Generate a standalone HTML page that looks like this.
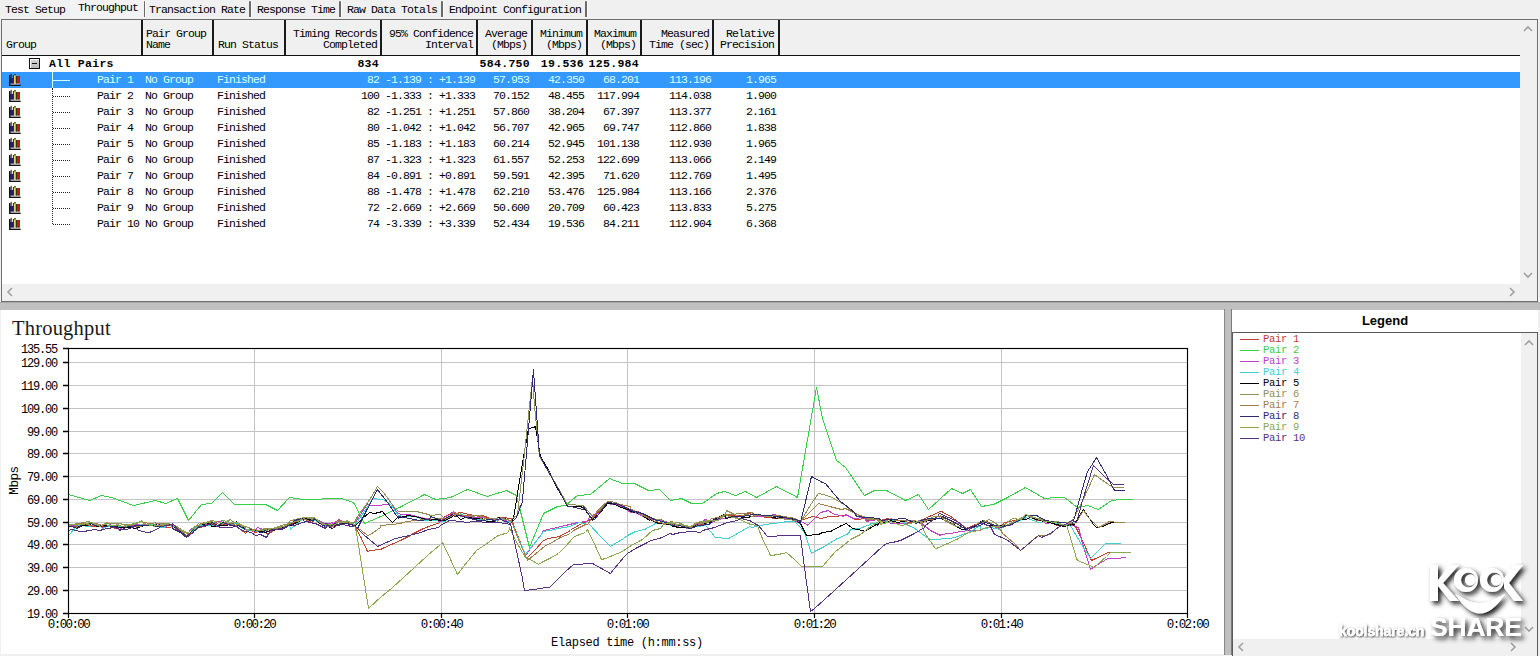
<!DOCTYPE html><html><head><meta charset='utf-8'><style>
*{margin:0;padding:0;box-sizing:border-box}
html,body{width:1540px;height:656px;overflow:hidden;background:#f0f0f0;position:relative}
.a{position:absolute}
.t{position:absolute;font-family:"Liberation Mono", monospace;font-size:11.5px;letter-spacing:-0.9px;line-height:11px;color:#000;white-space:pre}
.r{text-align:right}
.b{font-weight:bold;letter-spacing:0.3px}
</style></head><body>
<div class='t' style='left:5px;top:4px'>Test Setup</div>
<div class='t' style='left:149px;top:4px'>Transaction Rate</div>
<div class='t' style='left:257px;top:4px'>Response Time</div>
<div class='t' style='left:347px;top:4px'>Raw Data Totals</div>
<div class='t' style='left:449px;top:4px'>Endpoint Configuration</div>
<div class='a' style='left:143px;top:1px;width:2px;height:16px;background:#6a6a6a;border-radius:1px 1px 0 0'></div>
<div class='a' style='left:145px;top:1px;width:1px;height:16px;background:#fafafa'></div>
<div class='a' style='left:249px;top:1px;width:2px;height:16px;background:#6a6a6a;border-radius:1px 1px 0 0'></div>
<div class='a' style='left:251px;top:1px;width:1px;height:16px;background:#fafafa'></div>
<div class='a' style='left:339px;top:1px;width:2px;height:16px;background:#6a6a6a;border-radius:1px 1px 0 0'></div>
<div class='a' style='left:341px;top:1px;width:1px;height:16px;background:#fafafa'></div>
<div class='a' style='left:441px;top:1px;width:2px;height:16px;background:#6a6a6a;border-radius:1px 1px 0 0'></div>
<div class='a' style='left:443px;top:1px;width:1px;height:16px;background:#fafafa'></div>
<div class='a' style='left:585px;top:1px;width:2px;height:16px;background:#6a6a6a;border-radius:1px 1px 0 0'></div>
<div class='a' style='left:587px;top:1px;width:1px;height:16px;background:#fafafa'></div>
<div class='a' style='left:70px;top:0;width:74px;height:18px;background:#f3f3f3'></div>
<div class='t' style='left:78px;top:2px'>Throughput</div>
<div class='a' style='left:1px;top:19px;width:1537px;height:283px;background:#fff;border:1px solid #6e6e6e'></div>
<div class='a' style='left:2px;top:20px;width:1518px;height:35px;background:#f0f0f0'></div>
<div class='a' style='left:2px;top:55px;width:1518px;height:1px;background:#111'></div>
<div class='a' style='left:141px;top:20px;width:2px;height:35px;background:#1a1a1a'></div>
<div class='a' style='left:212px;top:20px;width:2px;height:35px;background:#1a1a1a'></div>
<div class='a' style='left:284px;top:20px;width:2px;height:35px;background:#1a1a1a'></div>
<div class='a' style='left:380px;top:20px;width:2px;height:35px;background:#1a1a1a'></div>
<div class='a' style='left:476px;top:20px;width:2px;height:35px;background:#1a1a1a'></div>
<div class='a' style='left:531px;top:20px;width:2px;height:35px;background:#1a1a1a'></div>
<div class='a' style='left:586px;top:20px;width:2px;height:35px;background:#1a1a1a'></div>
<div class='a' style='left:640px;top:20px;width:2px;height:35px;background:#1a1a1a'></div>
<div class='a' style='left:712px;top:20px;width:2px;height:35px;background:#1a1a1a'></div>
<div class='a' style='left:778px;top:20px;width:2px;height:35px;background:#1a1a1a'></div>
<div class='t' style='left:6px;top:39px'>Group</div>
<div class='t' style='left:146px;top:28px'>Pair Group</div>
<div class='t' style='left:146px;top:39px'>Name</div>
<div class='t' style='left:218px;top:39px'>Run Status</div>
<div class='t r' style='left:177px;width:200px;top:28px'>Timing Records</div>
<div class='t r' style='left:177px;width:200px;top:39px'>Completed</div>
<div class='t r' style='left:273px;width:200px;top:28px'>95% Confidence</div>
<div class='t r' style='left:273px;width:200px;top:39px'>Interval</div>
<div class='t r' style='left:327px;width:200px;top:28px'>Average</div>
<div class='t r' style='left:327px;width:200px;top:39px'>(Mbps)</div>
<div class='t r' style='left:382px;width:200px;top:28px'>Minimum</div>
<div class='t r' style='left:382px;width:200px;top:39px'>(Mbps)</div>
<div class='t r' style='left:436px;width:200px;top:28px'>Maximum</div>
<div class='t r' style='left:436px;width:200px;top:39px'>(Mbps)</div>
<div class='t r' style='left:509px;width:200px;top:28px'>Measured</div>
<div class='t r' style='left:509px;width:200px;top:39px'>Time (sec)</div>
<div class='t r' style='left:574px;width:200px;top:28px'>Relative</div>
<div class='t r' style='left:574px;width:200px;top:39px'>Precision</div>
<div class='a' style='left:29px;top:58px;width:11px;height:11px;border:1px solid #111;background:linear-gradient(#d8d8d8,#b8b8b8);box-shadow:inset 1px 1px 0 #fff'></div>
<div class='a' style='left:32px;top:63px;width:5px;height:1px;background:#111'></div>
<div class='t b' style='left:49px;top:58px;font-size:11.5px'>All Pairs</div>
<div class='t r b' style='left:179px;width:200px;top:58px;font-size:11.5px'>834</div>
<div class='t r b' style='left:330px;width:200px;top:58px;font-size:11.5px'>584.750</div>
<div class='t r b' style='left:384px;width:200px;top:58px;font-size:11.5px'>19.536</div>
<div class='t r b' style='left:439px;width:200px;top:58px;font-size:11.5px'>125.984</div>
<div class='a' style='left:2px;top:72px;width:1518px;height:16px;background:#3399ff'></div>
<div class='a' style='left:52px;top:88px;width:1px;height:136px;border-left:1px dotted #222'></div>
<div class='a' style='left:52px;top:72px;width:1px;height:16px;background:#cfffff'></div>
<svg class='a' style='left:9px;top:73px' width='13' height='13' viewBox='0 0 13 13'><rect x='1.2' y='5' width='3.4' height='6' fill='#1c1c90'/><rect x='4.4' y='1.8' width='2.8' height='9.2' fill='#e6d050'/><rect x='7.2' y='3' width='3.8' height='8' fill='#a82818'/><path d='M0.8,2 L0.8,12.2 L11.6,12.2' fill='none' stroke='#111' stroke-width='1.6'/><path d='M2.2,0.8 L2.2,5 M4.4,2 L4.4,11 M7.3,3 L7.3,11 M5,1.8 L7,1.8' fill='none' stroke='#222' stroke-width='1'/><rect x='1.5' y='10.6' width='9.5' height='0.8' fill='#d8d8e8'/></svg>
<div class='a' style='left:53px;top:80px;width:17px;height:1px;background:#cfffff'></div>
<div class='t' style='left:97px;top:74px;color:#d8ffff'>Pair 1</div>
<div class='t' style='left:145px;top:74px;color:#d8ffff'>No Group</div>
<div class='t' style='left:217px;top:74px;color:#d8ffff'>Finished</div>
<div class='t r' style='left:179px;width:200px;top:74px;color:#d8ffff'>82</div>
<div class='t r' style='left:275px;width:200px;top:74px;color:#d8ffff'>-1.139 : +1.139</div>
<div class='t r' style='left:329px;width:200px;top:74px;color:#d8ffff'>57.953</div>
<div class='t r' style='left:384px;width:200px;top:74px;color:#d8ffff'>42.350</div>
<div class='t r' style='left:439px;width:200px;top:74px;color:#d8ffff'>68.201</div>
<div class='t r' style='left:511px;width:200px;top:74px;color:#d8ffff'>113.196</div>
<div class='t r' style='left:576px;width:200px;top:74px;color:#d8ffff'>1.965</div>
<svg class='a' style='left:9px;top:89px' width='13' height='13' viewBox='0 0 13 13'><rect x='1.2' y='5' width='3.4' height='6' fill='#1c1c90'/><rect x='4.4' y='1.8' width='2.8' height='9.2' fill='#e6d050'/><rect x='7.2' y='3' width='3.8' height='8' fill='#a82818'/><path d='M0.8,2 L0.8,12.2 L11.6,12.2' fill='none' stroke='#111' stroke-width='1.6'/><path d='M2.2,0.8 L2.2,5 M4.4,2 L4.4,11 M7.3,3 L7.3,11 M5,1.8 L7,1.8' fill='none' stroke='#222' stroke-width='1'/><rect x='1.5' y='10.6' width='9.5' height='0.8' fill='#d8d8e8'/></svg>
<div class='a' style='left:53px;top:96px;width:17px;height:1px;border-top:1px dotted #222'></div>
<div class='t' style='left:97px;top:90px;color:#000'>Pair 2</div>
<div class='t' style='left:145px;top:90px;color:#000'>No Group</div>
<div class='t' style='left:217px;top:90px;color:#000'>Finished</div>
<div class='t r' style='left:179px;width:200px;top:90px;color:#000'>100</div>
<div class='t r' style='left:275px;width:200px;top:90px;color:#000'>-1.333 : +1.333</div>
<div class='t r' style='left:329px;width:200px;top:90px;color:#000'>70.152</div>
<div class='t r' style='left:384px;width:200px;top:90px;color:#000'>48.455</div>
<div class='t r' style='left:439px;width:200px;top:90px;color:#000'>117.994</div>
<div class='t r' style='left:511px;width:200px;top:90px;color:#000'>114.038</div>
<div class='t r' style='left:576px;width:200px;top:90px;color:#000'>1.900</div>
<svg class='a' style='left:9px;top:105px' width='13' height='13' viewBox='0 0 13 13'><rect x='1.2' y='5' width='3.4' height='6' fill='#1c1c90'/><rect x='4.4' y='1.8' width='2.8' height='9.2' fill='#e6d050'/><rect x='7.2' y='3' width='3.8' height='8' fill='#a82818'/><path d='M0.8,2 L0.8,12.2 L11.6,12.2' fill='none' stroke='#111' stroke-width='1.6'/><path d='M2.2,0.8 L2.2,5 M4.4,2 L4.4,11 M7.3,3 L7.3,11 M5,1.8 L7,1.8' fill='none' stroke='#222' stroke-width='1'/><rect x='1.5' y='10.6' width='9.5' height='0.8' fill='#d8d8e8'/></svg>
<div class='a' style='left:53px;top:112px;width:17px;height:1px;border-top:1px dotted #222'></div>
<div class='t' style='left:97px;top:106px;color:#000'>Pair 3</div>
<div class='t' style='left:145px;top:106px;color:#000'>No Group</div>
<div class='t' style='left:217px;top:106px;color:#000'>Finished</div>
<div class='t r' style='left:179px;width:200px;top:106px;color:#000'>82</div>
<div class='t r' style='left:275px;width:200px;top:106px;color:#000'>-1.251 : +1.251</div>
<div class='t r' style='left:329px;width:200px;top:106px;color:#000'>57.860</div>
<div class='t r' style='left:384px;width:200px;top:106px;color:#000'>38.204</div>
<div class='t r' style='left:439px;width:200px;top:106px;color:#000'>67.397</div>
<div class='t r' style='left:511px;width:200px;top:106px;color:#000'>113.377</div>
<div class='t r' style='left:576px;width:200px;top:106px;color:#000'>2.161</div>
<svg class='a' style='left:9px;top:121px' width='13' height='13' viewBox='0 0 13 13'><rect x='1.2' y='5' width='3.4' height='6' fill='#1c1c90'/><rect x='4.4' y='1.8' width='2.8' height='9.2' fill='#e6d050'/><rect x='7.2' y='3' width='3.8' height='8' fill='#a82818'/><path d='M0.8,2 L0.8,12.2 L11.6,12.2' fill='none' stroke='#111' stroke-width='1.6'/><path d='M2.2,0.8 L2.2,5 M4.4,2 L4.4,11 M7.3,3 L7.3,11 M5,1.8 L7,1.8' fill='none' stroke='#222' stroke-width='1'/><rect x='1.5' y='10.6' width='9.5' height='0.8' fill='#d8d8e8'/></svg>
<div class='a' style='left:53px;top:128px;width:17px;height:1px;border-top:1px dotted #222'></div>
<div class='t' style='left:97px;top:122px;color:#000'>Pair 4</div>
<div class='t' style='left:145px;top:122px;color:#000'>No Group</div>
<div class='t' style='left:217px;top:122px;color:#000'>Finished</div>
<div class='t r' style='left:179px;width:200px;top:122px;color:#000'>80</div>
<div class='t r' style='left:275px;width:200px;top:122px;color:#000'>-1.042 : +1.042</div>
<div class='t r' style='left:329px;width:200px;top:122px;color:#000'>56.707</div>
<div class='t r' style='left:384px;width:200px;top:122px;color:#000'>42.965</div>
<div class='t r' style='left:439px;width:200px;top:122px;color:#000'>69.747</div>
<div class='t r' style='left:511px;width:200px;top:122px;color:#000'>112.860</div>
<div class='t r' style='left:576px;width:200px;top:122px;color:#000'>1.838</div>
<svg class='a' style='left:9px;top:137px' width='13' height='13' viewBox='0 0 13 13'><rect x='1.2' y='5' width='3.4' height='6' fill='#1c1c90'/><rect x='4.4' y='1.8' width='2.8' height='9.2' fill='#e6d050'/><rect x='7.2' y='3' width='3.8' height='8' fill='#a82818'/><path d='M0.8,2 L0.8,12.2 L11.6,12.2' fill='none' stroke='#111' stroke-width='1.6'/><path d='M2.2,0.8 L2.2,5 M4.4,2 L4.4,11 M7.3,3 L7.3,11 M5,1.8 L7,1.8' fill='none' stroke='#222' stroke-width='1'/><rect x='1.5' y='10.6' width='9.5' height='0.8' fill='#d8d8e8'/></svg>
<div class='a' style='left:53px;top:144px;width:17px;height:1px;border-top:1px dotted #222'></div>
<div class='t' style='left:97px;top:138px;color:#000'>Pair 5</div>
<div class='t' style='left:145px;top:138px;color:#000'>No Group</div>
<div class='t' style='left:217px;top:138px;color:#000'>Finished</div>
<div class='t r' style='left:179px;width:200px;top:138px;color:#000'>85</div>
<div class='t r' style='left:275px;width:200px;top:138px;color:#000'>-1.183 : +1.183</div>
<div class='t r' style='left:329px;width:200px;top:138px;color:#000'>60.214</div>
<div class='t r' style='left:384px;width:200px;top:138px;color:#000'>52.945</div>
<div class='t r' style='left:439px;width:200px;top:138px;color:#000'>101.138</div>
<div class='t r' style='left:511px;width:200px;top:138px;color:#000'>112.930</div>
<div class='t r' style='left:576px;width:200px;top:138px;color:#000'>1.965</div>
<svg class='a' style='left:9px;top:153px' width='13' height='13' viewBox='0 0 13 13'><rect x='1.2' y='5' width='3.4' height='6' fill='#1c1c90'/><rect x='4.4' y='1.8' width='2.8' height='9.2' fill='#e6d050'/><rect x='7.2' y='3' width='3.8' height='8' fill='#a82818'/><path d='M0.8,2 L0.8,12.2 L11.6,12.2' fill='none' stroke='#111' stroke-width='1.6'/><path d='M2.2,0.8 L2.2,5 M4.4,2 L4.4,11 M7.3,3 L7.3,11 M5,1.8 L7,1.8' fill='none' stroke='#222' stroke-width='1'/><rect x='1.5' y='10.6' width='9.5' height='0.8' fill='#d8d8e8'/></svg>
<div class='a' style='left:53px;top:160px;width:17px;height:1px;border-top:1px dotted #222'></div>
<div class='t' style='left:97px;top:154px;color:#000'>Pair 6</div>
<div class='t' style='left:145px;top:154px;color:#000'>No Group</div>
<div class='t' style='left:217px;top:154px;color:#000'>Finished</div>
<div class='t r' style='left:179px;width:200px;top:154px;color:#000'>87</div>
<div class='t r' style='left:275px;width:200px;top:154px;color:#000'>-1.323 : +1.323</div>
<div class='t r' style='left:329px;width:200px;top:154px;color:#000'>61.557</div>
<div class='t r' style='left:384px;width:200px;top:154px;color:#000'>52.253</div>
<div class='t r' style='left:439px;width:200px;top:154px;color:#000'>122.699</div>
<div class='t r' style='left:511px;width:200px;top:154px;color:#000'>113.066</div>
<div class='t r' style='left:576px;width:200px;top:154px;color:#000'>2.149</div>
<svg class='a' style='left:9px;top:169px' width='13' height='13' viewBox='0 0 13 13'><rect x='1.2' y='5' width='3.4' height='6' fill='#1c1c90'/><rect x='4.4' y='1.8' width='2.8' height='9.2' fill='#e6d050'/><rect x='7.2' y='3' width='3.8' height='8' fill='#a82818'/><path d='M0.8,2 L0.8,12.2 L11.6,12.2' fill='none' stroke='#111' stroke-width='1.6'/><path d='M2.2,0.8 L2.2,5 M4.4,2 L4.4,11 M7.3,3 L7.3,11 M5,1.8 L7,1.8' fill='none' stroke='#222' stroke-width='1'/><rect x='1.5' y='10.6' width='9.5' height='0.8' fill='#d8d8e8'/></svg>
<div class='a' style='left:53px;top:176px;width:17px;height:1px;border-top:1px dotted #222'></div>
<div class='t' style='left:97px;top:170px;color:#000'>Pair 7</div>
<div class='t' style='left:145px;top:170px;color:#000'>No Group</div>
<div class='t' style='left:217px;top:170px;color:#000'>Finished</div>
<div class='t r' style='left:179px;width:200px;top:170px;color:#000'>84</div>
<div class='t r' style='left:275px;width:200px;top:170px;color:#000'>-0.891 : +0.891</div>
<div class='t r' style='left:329px;width:200px;top:170px;color:#000'>59.591</div>
<div class='t r' style='left:384px;width:200px;top:170px;color:#000'>42.395</div>
<div class='t r' style='left:439px;width:200px;top:170px;color:#000'>71.620</div>
<div class='t r' style='left:511px;width:200px;top:170px;color:#000'>112.769</div>
<div class='t r' style='left:576px;width:200px;top:170px;color:#000'>1.495</div>
<svg class='a' style='left:9px;top:185px' width='13' height='13' viewBox='0 0 13 13'><rect x='1.2' y='5' width='3.4' height='6' fill='#1c1c90'/><rect x='4.4' y='1.8' width='2.8' height='9.2' fill='#e6d050'/><rect x='7.2' y='3' width='3.8' height='8' fill='#a82818'/><path d='M0.8,2 L0.8,12.2 L11.6,12.2' fill='none' stroke='#111' stroke-width='1.6'/><path d='M2.2,0.8 L2.2,5 M4.4,2 L4.4,11 M7.3,3 L7.3,11 M5,1.8 L7,1.8' fill='none' stroke='#222' stroke-width='1'/><rect x='1.5' y='10.6' width='9.5' height='0.8' fill='#d8d8e8'/></svg>
<div class='a' style='left:53px;top:192px;width:17px;height:1px;border-top:1px dotted #222'></div>
<div class='t' style='left:97px;top:186px;color:#000'>Pair 8</div>
<div class='t' style='left:145px;top:186px;color:#000'>No Group</div>
<div class='t' style='left:217px;top:186px;color:#000'>Finished</div>
<div class='t r' style='left:179px;width:200px;top:186px;color:#000'>88</div>
<div class='t r' style='left:275px;width:200px;top:186px;color:#000'>-1.478 : +1.478</div>
<div class='t r' style='left:329px;width:200px;top:186px;color:#000'>62.210</div>
<div class='t r' style='left:384px;width:200px;top:186px;color:#000'>53.476</div>
<div class='t r' style='left:439px;width:200px;top:186px;color:#000'>125.984</div>
<div class='t r' style='left:511px;width:200px;top:186px;color:#000'>113.166</div>
<div class='t r' style='left:576px;width:200px;top:186px;color:#000'>2.376</div>
<svg class='a' style='left:9px;top:201px' width='13' height='13' viewBox='0 0 13 13'><rect x='1.2' y='5' width='3.4' height='6' fill='#1c1c90'/><rect x='4.4' y='1.8' width='2.8' height='9.2' fill='#e6d050'/><rect x='7.2' y='3' width='3.8' height='8' fill='#a82818'/><path d='M0.8,2 L0.8,12.2 L11.6,12.2' fill='none' stroke='#111' stroke-width='1.6'/><path d='M2.2,0.8 L2.2,5 M4.4,2 L4.4,11 M7.3,3 L7.3,11 M5,1.8 L7,1.8' fill='none' stroke='#222' stroke-width='1'/><rect x='1.5' y='10.6' width='9.5' height='0.8' fill='#d8d8e8'/></svg>
<div class='a' style='left:53px;top:208px;width:17px;height:1px;border-top:1px dotted #222'></div>
<div class='t' style='left:97px;top:202px;color:#000'>Pair 9</div>
<div class='t' style='left:145px;top:202px;color:#000'>No Group</div>
<div class='t' style='left:217px;top:202px;color:#000'>Finished</div>
<div class='t r' style='left:179px;width:200px;top:202px;color:#000'>72</div>
<div class='t r' style='left:275px;width:200px;top:202px;color:#000'>-2.669 : +2.669</div>
<div class='t r' style='left:329px;width:200px;top:202px;color:#000'>50.600</div>
<div class='t r' style='left:384px;width:200px;top:202px;color:#000'>20.709</div>
<div class='t r' style='left:439px;width:200px;top:202px;color:#000'>60.423</div>
<div class='t r' style='left:511px;width:200px;top:202px;color:#000'>113.833</div>
<div class='t r' style='left:576px;width:200px;top:202px;color:#000'>5.275</div>
<svg class='a' style='left:9px;top:217px' width='13' height='13' viewBox='0 0 13 13'><rect x='1.2' y='5' width='3.4' height='6' fill='#1c1c90'/><rect x='4.4' y='1.8' width='2.8' height='9.2' fill='#e6d050'/><rect x='7.2' y='3' width='3.8' height='8' fill='#a82818'/><path d='M0.8,2 L0.8,12.2 L11.6,12.2' fill='none' stroke='#111' stroke-width='1.6'/><path d='M2.2,0.8 L2.2,5 M4.4,2 L4.4,11 M7.3,3 L7.3,11 M5,1.8 L7,1.8' fill='none' stroke='#222' stroke-width='1'/><rect x='1.5' y='10.6' width='9.5' height='0.8' fill='#d8d8e8'/></svg>
<div class='a' style='left:53px;top:224px;width:17px;height:1px;border-top:1px dotted #222'></div>
<div class='t' style='left:97px;top:218px;color:#000'>Pair 10</div>
<div class='t' style='left:145px;top:218px;color:#000'>No Group</div>
<div class='t' style='left:217px;top:218px;color:#000'>Finished</div>
<div class='t r' style='left:179px;width:200px;top:218px;color:#000'>74</div>
<div class='t r' style='left:275px;width:200px;top:218px;color:#000'>-3.339 : +3.339</div>
<div class='t r' style='left:329px;width:200px;top:218px;color:#000'>52.434</div>
<div class='t r' style='left:384px;width:200px;top:218px;color:#000'>19.536</div>
<div class='t r' style='left:439px;width:200px;top:218px;color:#000'>84.211</div>
<div class='t r' style='left:511px;width:200px;top:218px;color:#000'>112.904</div>
<div class='t r' style='left:576px;width:200px;top:218px;color:#000'>6.368</div>
<div class='a' style='left:1520px;top:20px;width:17px;height:264px;background:#f0f0f0'></div>
<div class='a' style='left:2px;top:284px;width:1535px;height:17px;background:#f0f0f0'></div>
<div class='a' style='left:0;top:302px;width:1540px;height:8px;background:#c0c0c0;border-top:1px solid #a8a8a8'></div>
<div class='a' style='left:1px;top:310px;width:1223px;height:344px;background:#fff'></div>
<div class='a' style='left:1224px;top:309px;width:8px;height:346px;background:#c0c0c0;border-left:1px solid #888;border-right:1px solid #7a7a7a'></div>
<div class='a' style='left:1232px;top:310px;width:306px;height:344px;background:#fff'></div>
<div class='a' style='left:1232px;top:313px;width:306px;text-align:center;font-family:"Liberation Sans", sans-serif;font-weight:bold;font-size:13px;line-height:16px;color:#000'>Legend</div>
<div class='a' style='left:1232px;top:332px;width:306px;height:330px;border:1px solid #5a5a5a;background:#fff'></div>
<div class='a' style='left:1521px;top:333px;width:16px;height:306px;background:#f0f0f0'></div>
<div class='a' style='left:1233px;top:639px;width:304px;height:17px;background:#f0f0f0'></div>
<div class='a' style='left:1240px;top:339px;width:19px;height:1px;background:#c04030'></div>
<div class='t' style='left:1263px;top:334px;color:#c04030;font-size:10.5px;letter-spacing:-0.3px;line-height:10px'>Pair 1</div>
<div class='a' style='left:1240px;top:350px;width:19px;height:1px;background:#38d048'></div>
<div class='t' style='left:1263px;top:345px;color:#38d048;font-size:10.5px;letter-spacing:-0.3px;line-height:10px'>Pair 2</div>
<div class='a' style='left:1240px;top:361px;width:19px;height:1px;background:#c040c8'></div>
<div class='t' style='left:1263px;top:356px;color:#c040c8;font-size:10.5px;letter-spacing:-0.3px;line-height:10px'>Pair 3</div>
<div class='a' style='left:1240px;top:372px;width:19px;height:1px;background:#40d0d0'></div>
<div class='t' style='left:1263px;top:367px;color:#40d0d0;font-size:10.5px;letter-spacing:-0.3px;line-height:10px'>Pair 4</div>
<div class='a' style='left:1240px;top:383px;width:19px;height:1px;background:#000000'></div>
<div class='t' style='left:1263px;top:378px;color:#000000;font-size:10.5px;letter-spacing:-0.3px;line-height:10px'>Pair 5</div>
<div class='a' style='left:1240px;top:394px;width:19px;height:1px;background:#909058'></div>
<div class='t' style='left:1263px;top:389px;color:#909058;font-size:10.5px;letter-spacing:-0.3px;line-height:10px'>Pair 6</div>
<div class='a' style='left:1240px;top:405px;width:19px;height:1px;background:#a08048'></div>
<div class='t' style='left:1263px;top:400px;color:#a08048;font-size:10.5px;letter-spacing:-0.3px;line-height:10px'>Pair 7</div>
<div class='a' style='left:1240px;top:416px;width:19px;height:1px;background:#2c2c70'></div>
<div class='t' style='left:1263px;top:411px;color:#2c2c70;font-size:10.5px;letter-spacing:-0.3px;line-height:10px'>Pair 8</div>
<div class='a' style='left:1240px;top:427px;width:19px;height:1px;background:#8aa850'></div>
<div class='t' style='left:1263px;top:422px;color:#8aa850;font-size:10.5px;letter-spacing:-0.3px;line-height:10px'>Pair 9</div>
<div class='a' style='left:1240px;top:438px;width:19px;height:1px;background:#583080'></div>
<div class='t' style='left:1263px;top:433px;color:#583080;font-size:10.5px;letter-spacing:-0.3px;line-height:10px'>Pair 10</div>
<svg class='a' style='left:0;top:0' width='1540' height='656'><path d='M1524,31 L1528,27 L1532,31' fill='none' stroke='#a0a0a0' stroke-width='1.6'/><path d='M1524,273 L1528,277 L1532,273' fill='none' stroke='#a0a0a0' stroke-width='1.6'/><path d='M12,288 L8,292 L12,296' fill='none' stroke='#a0a0a0' stroke-width='1.6'/><path d='M1510,288 L1514,292 L1510,296' fill='none' stroke='#a0a0a0' stroke-width='1.6'/><path d='M1525,345 L1529,341 L1533,345' fill='none' stroke='#a0a0a0' stroke-width='1.6'/><path d='M1525,627 L1529,631 L1533,627' fill='none' stroke='#a0a0a0' stroke-width='1.6'/><path d='M1243,643 L1239,647 L1243,651' fill='none' stroke='#a0a0a0' stroke-width='1.6'/><path d='M1511,643 L1515,647 L1511,651' fill='none' stroke='#a0a0a0' stroke-width='1.6'/></svg>
<svg class='a' style='left:0;top:0' width='1540' height='656'><line x1='69' x2='1187' y1='590.5' y2='590.5' stroke='#c4c4c4' stroke-width='1'/><line x1='69' x2='1187' y1='567.5' y2='567.5' stroke='#c4c4c4' stroke-width='1'/><line x1='69' x2='1187' y1='544.5' y2='544.5' stroke='#c4c4c4' stroke-width='1'/><line x1='69' x2='1187' y1='522.5' y2='522.5' stroke='#c4c4c4' stroke-width='1'/><line x1='69' x2='1187' y1='499.5' y2='499.5' stroke='#c4c4c4' stroke-width='1'/><line x1='69' x2='1187' y1='476.5' y2='476.5' stroke='#c4c4c4' stroke-width='1'/><line x1='69' x2='1187' y1='453.5' y2='453.5' stroke='#c4c4c4' stroke-width='1'/><line x1='69' x2='1187' y1='431.5' y2='431.5' stroke='#c4c4c4' stroke-width='1'/><line x1='69' x2='1187' y1='408.5' y2='408.5' stroke='#c4c4c4' stroke-width='1'/><line x1='69' x2='1187' y1='385.5' y2='385.5' stroke='#c4c4c4' stroke-width='1'/><line x1='69' x2='1187' y1='362.5' y2='362.5' stroke='#c4c4c4' stroke-width='1'/><line x1='254.5' x2='254.5' y1='349' y2='613' stroke='#c4c4c4' stroke-width='1'/><line x1='441.5' x2='441.5' y1='349' y2='613' stroke='#c4c4c4' stroke-width='1'/><line x1='627.5' x2='627.5' y1='349' y2='613' stroke='#c4c4c4' stroke-width='1'/><line x1='814.5' x2='814.5' y1='349' y2='613' stroke='#c4c4c4' stroke-width='1'/><line x1='1001.5' x2='1001.5' y1='349' y2='613' stroke='#c4c4c4' stroke-width='1'/><polyline points='68.5,526.5 70.5,525.5 77.5,527.5 80.5,523.5 90.5,526.5 92.5,526.5 100.5,526.5 104.5,526.5 107.5,526.5 116.5,528.5 119.5,527.5 127.5,527.5 130.5,527.5 139.5,525.5 141.5,524.5 150.5,525.5 155.5,525.5 160.5,527.5 165.5,527.5 170.5,527.5 172.5,525.5 180.5,532.5 186.5,536.5 192.5,531.5 198.5,527.5 205.5,526.5 211.5,522.5 216.5,525.5 222.5,524.5 226.5,524.5 236.5,526.5 238.5,527.5 245.5,533.5 248.5,529.5 255.5,532.5 257.5,531.5 266.5,532.5 267.5,534.5 278.5,527.5 280.5,527.5 289.5,524.5 290.5,524.5 302.5,519.5 302.5,518.5 312.5,522.5 314.5,518.5 324.5,523.5 325.5,526.5 332.5,525.5 336.5,524.5 338.5,522.5 346.5,522.5 348.5,522.5 354.5,525.5 361.5,538.5 367.5,551.5 370.5,550.5 380.5,549.5 382.5,548.5 391.5,544.5 400.5,540.5 410.5,535.5 411.5,534.5 423.5,528.5 434.5,524.5 440.5,522.5 444.5,516.5 445.5,516.5 452.5,512.5 456.5,513.5 460.5,512.5 469.5,514.5 479.5,516.5 482.5,515.5 490.5,518.5 494.5,518.5 500.5,517.5 501.5,517.5 511.5,518.5 514.5,527.5 524.5,552.5 526.5,558.5 535.5,549.5 543.5,540.5 548.5,538.5 559.5,536.5 570.5,530.5 571.5,529.5 583.5,522.5 587.5,521.5 594.5,516.5 604.5,505.5 607.5,502.5 615.5,503.5 616.5,503.5 627.5,508.5 630.5,510.5 637.5,511.5 650.5,518.5 650.5,519.5 660.5,519.5 671.5,524.5 672.5,524.5 683.5,525.5 690.5,528.5 695.5,526.5 708.5,522.5 711.5,520.5 719.5,518.5 725.5,515.5 729.5,515.5 742.5,515.5 752.5,512.5 754.5,514.5 766.5,517.5 777.5,518.5 778.5,516.5 789.5,518.5 800.5,523.5 800.5,520.5 812.5,516.5 821.5,518.5 828.5,516.5 833.5,516.5 845.5,515.5 845.5,514.5 855.5,519.5 866.5,518.5 867.5,520.5 879.5,519.5 880.5,520.5 888.5,518.5 890.5,520.5 898.5,520.5 909.5,522.5 919.5,521.5 920.5,520.5 929.5,516.5 940.5,511.5 941.5,511.5 952.5,517.5 964.5,527.5 966.5,528.5 975.5,524.5 982.5,523.5 986.5,521.5 995.5,525.5 1000.5,527.5 1004.5,522.5 1014.5,520.5 1025.5,516.5 1025.5,514.5 1037.5,520.5 1045.5,520.5 1047.5,521.5 1057.5,525.5 1070.5,524.5 1070.5,523.5 1075.5,526.5 1081.5,538.5 1091.5,560.5 1093.5,559.5 1104.5,554.5 1107.5,552.5 1116.5,552.5 1127.5,552.5 1127.5,552.5' fill='none' stroke='#c04030' stroke-width='1' shape-rendering='crispEdges'/><polyline points='68.5,494.5 89.5,500.5 101.5,495.5 111.5,497.5 133.5,505.5 155.5,500.5 165.5,503.5 177.5,498.5 188.5,520.5 201.5,504.5 211.5,503.5 222.5,492.5 234.5,504.5 250.5,504.5 265.5,504.5 277.5,510.5 289.5,497.5 303.5,499.5 341.5,498.5 353.5,502.5 364.5,523.5 378.5,517.5 401.5,506.5 424.5,494.5 435.5,499.5 450.5,497.5 467.5,489.5 487.5,496.5 506.5,490.5 516.5,495.5 529.5,547.5 543.5,513.5 557.5,506.5 565.5,505.5 577.5,495.5 590.5,494.5 609.5,478.5 622.5,483.5 634.5,483.5 648.5,490.5 659.5,489.5 670.5,500.5 681.5,498.5 691.5,503.5 702.5,503.5 716.5,493.5 724.5,491.5 735.5,495.5 745.5,491.5 756.5,497.5 776.5,486.5 797.5,497.5 816.5,387.5 822.5,418.5 836.5,460.5 845.5,467.5 864.5,495.5 874.5,490.5 886.5,490.5 905.5,500.5 918.5,494.5 928.5,509.5 951.5,488.5 962.5,493.5 970.5,489.5 981.5,506.5 993.5,504.5 1007.5,497.5 1025.5,487.5 1044.5,498.5 1055.5,497.5 1064.5,497.5 1077.5,507.5 1087.5,505.5 1098.5,509.5 1111.5,500.5 1120.5,499.5 1132.5,499.5' fill='none' stroke='#38d048' stroke-width='1' shape-rendering='crispEdges'/><polyline points='68.5,526.5 70.5,524.5 77.5,526.5 81.5,523.5 90.5,524.5 91.5,525.5 100.5,526.5 103.5,527.5 107.5,522.5 114.5,527.5 119.5,529.5 125.5,525.5 130.5,525.5 136.5,524.5 141.5,524.5 147.5,525.5 155.5,524.5 156.5,523.5 165.5,527.5 168.5,524.5 172.5,526.5 179.5,529.5 186.5,535.5 190.5,529.5 198.5,525.5 203.5,524.5 211.5,524.5 215.5,522.5 222.5,520.5 225.5,524.5 235.5,523.5 236.5,524.5 245.5,528.5 245.5,526.5 255.5,530.5 257.5,527.5 266.5,530.5 269.5,531.5 280.5,527.5 290.5,525.5 291.5,525.5 302.5,517.5 302.5,518.5 312.5,519.5 314.5,519.5 323.5,522.5 325.5,524.5 332.5,522.5 332.5,524.5 338.5,519.5 344.5,522.5 346.5,523.5 354.5,525.5 355.5,522.5 367.5,503.5 368.5,505.5 377.5,505.5 386.5,504.5 390.5,504.5 397.5,512.5 400.5,514.5 408.5,514.5 420.5,517.5 430.5,519.5 432.5,520.5 442.5,521.5 445.5,516.5 452.5,513.5 453.5,511.5 460.5,516.5 466.5,516.5 475.5,517.5 482.5,517.5 485.5,518.5 494.5,518.5 496.5,519.5 500.5,519.5 508.5,521.5 511.5,521.5 519.5,540.5 525.5,555.5 530.5,548.5 541.5,534.5 543.5,530.5 552.5,528.5 565.5,525.5 577.5,522.5 587.5,521.5 589.5,516.5 600.5,512.5 607.5,503.5 612.5,504.5 615.5,504.5 623.5,507.5 630.5,512.5 635.5,512.5 647.5,518.5 650.5,519.5 659.5,520.5 669.5,522.5 672.5,525.5 681.5,527.5 690.5,528.5 693.5,526.5 705.5,519.5 711.5,522.5 717.5,519.5 725.5,518.5 728.5,516.5 741.5,518.5 752.5,516.5 752.5,516.5 763.5,516.5 775.5,514.5 777.5,517.5 788.5,518.5 798.5,522.5 800.5,521.5 807.5,524.5 807.5,525.5 820.5,512.5 828.5,510.5 832.5,513.5 843.5,516.5 845.5,514.5 853.5,518.5 864.5,517.5 866.5,521.5 877.5,519.5 880.5,520.5 887.5,520.5 890.5,523.5 898.5,523.5 910.5,523.5 919.5,520.5 920.5,522.5 930.5,530.5 940.5,535.5 940.5,534.5 950.5,533.5 960.5,531.5 970.5,530.5 980.5,530.5 980.5,529.5 990.5,526.5 999.5,527.5 1000.5,525.5 1009.5,525.5 1020.5,519.5 1025.5,519.5 1030.5,517.5 1042.5,520.5 1045.5,523.5 1052.5,522.5 1062.5,524.5 1070.5,524.5 1072.5,525.5 1078.5,527.5 1082.5,543.5 1090.5,569.5 1094.5,566.5 1104.5,560.5 1107.5,558.5 1115.5,558.5 1126.5,557.5' fill='none' stroke='#c040c8' stroke-width='1' shape-rendering='crispEdges'/><polyline points='68.5,535.5 77.5,525.5 79.5,525.5 90.5,526.5 90.5,525.5 100.5,526.5 102.5,528.5 107.5,526.5 113.5,526.5 119.5,526.5 123.5,526.5 130.5,526.5 133.5,526.5 141.5,524.5 144.5,525.5 154.5,524.5 155.5,526.5 164.5,527.5 165.5,525.5 172.5,525.5 177.5,528.5 186.5,536.5 189.5,533.5 198.5,526.5 198.5,525.5 208.5,525.5 211.5,525.5 218.5,525.5 222.5,523.5 230.5,522.5 236.5,523.5 239.5,526.5 245.5,529.5 249.5,530.5 255.5,531.5 258.5,530.5 266.5,532.5 268.5,529.5 279.5,529.5 280.5,529.5 289.5,524.5 290.5,529.5 300.5,520.5 302.5,519.5 311.5,518.5 314.5,520.5 323.5,524.5 325.5,526.5 332.5,525.5 334.5,526.5 338.5,521.5 346.5,522.5 346.5,520.5 354.5,525.5 357.5,521.5 370.5,502.5 372.5,498.5 380.5,499.5 383.5,499.5 390.5,504.5 398.5,515.5 402.5,516.5 414.5,516.5 425.5,520.5 426.5,520.5 437.5,520.5 445.5,521.5 447.5,517.5 452.5,514.5 457.5,516.5 460.5,513.5 467.5,518.5 480.5,519.5 482.5,519.5 492.5,522.5 494.5,521.5 500.5,518.5 505.5,522.5 511.5,521.5 516.5,533.5 525.5,554.5 528.5,550.5 538.5,538.5 543.5,531.5 549.5,530.5 558.5,528.5 569.5,526.5 579.5,522.5 587.5,524.5 588.5,523.5 601.5,537.5 610.5,546.5 610.5,546.5 623.5,538.5 627.5,535.5 635.5,531.5 644.5,529.5 655.5,523.5 660.5,522.5 668.5,524.5 672.5,525.5 681.5,525.5 690.5,528.5 692.5,527.5 704.5,525.5 705.5,525.5 715.5,537.5 716.5,537.5 726.5,538.5 728.5,538.5 737.5,533.5 749.5,526.5 752.5,527.5 759.5,525.5 772.5,523.5 782.5,522.5 786.5,521.5 794.5,521.5 800.5,527.5 804.5,532.5 811.5,553.5 814.5,551.5 824.5,546.5 835.5,539.5 848.5,533.5 850.5,529.5 859.5,528.5 870.5,524.5 870.5,523.5 882.5,523.5 890.5,520.5 892.5,520.5 902.5,520.5 905.5,524.5 913.5,527.5 925.5,536.5 930.5,539.5 935.5,539.5 946.5,538.5 950.5,538.5 957.5,536.5 968.5,532.5 980.5,525.5 980.5,529.5 990.5,527.5 1000.5,529.5 1002.5,527.5 1014.5,522.5 1025.5,518.5 1025.5,517.5 1038.5,522.5 1045.5,521.5 1048.5,521.5 1061.5,524.5 1068.5,524.5 1071.5,527.5 1081.5,544.5 1090.5,558.5 1094.5,554.5 1103.5,545.5 1105.5,543.5 1114.5,543.5 1120.5,543.5' fill='none' stroke='#40d0d0' stroke-width='1' shape-rendering='crispEdges'/><polyline points='68.5,526.5 77.5,527.5 79.5,526.5 90.5,524.5 91.5,525.5 100.5,526.5 103.5,525.5 107.5,525.5 113.5,525.5 119.5,527.5 123.5,527.5 130.5,527.5 135.5,528.5 141.5,526.5 147.5,524.5 155.5,526.5 156.5,523.5 165.5,525.5 166.5,525.5 172.5,525.5 179.5,530.5 186.5,536.5 188.5,536.5 198.5,526.5 200.5,524.5 210.5,523.5 211.5,526.5 222.5,525.5 222.5,525.5 234.5,524.5 236.5,521.5 245.5,529.5 245.5,529.5 255.5,530.5 256.5,530.5 266.5,532.5 266.5,531.5 278.5,529.5 280.5,528.5 289.5,525.5 290.5,525.5 300.5,520.5 302.5,518.5 311.5,519.5 314.5,518.5 322.5,525.5 325.5,525.5 332.5,528.5 332.5,528.5 338.5,522.5 342.5,523.5 346.5,523.5 353.5,522.5 354.5,526.5 362.5,518.5 369.5,512.5 374.5,513.5 382.5,511.5 386.5,516.5 392.5,522.5 398.5,516.5 400.5,517.5 408.5,515.5 419.5,517.5 430.5,520.5 432.5,519.5 442.5,520.5 445.5,520.5 452.5,516.5 455.5,514.5 460.5,519.5 465.5,517.5 477.5,518.5 482.5,518.5 486.5,521.5 494.5,521.5 498.5,517.5 500.5,517.5 510.5,520.5 511.5,521.5 513.5,518.5 521.5,468.5 528.5,428.5 533.5,427.5 535.5,426.5 540.5,456.5 546.5,466.5 558.5,490.5 567.5,505.5 568.5,506.5 579.5,506.5 583.5,507.5 588.5,514.5 592.5,519.5 599.5,513.5 607.5,503.5 609.5,503.5 615.5,504.5 618.5,506.5 630.5,510.5 630.5,511.5 639.5,513.5 649.5,520.5 650.5,519.5 658.5,523.5 670.5,524.5 672.5,526.5 680.5,527.5 689.5,527.5 690.5,527.5 701.5,523.5 711.5,522.5 713.5,519.5 724.5,514.5 725.5,518.5 735.5,516.5 746.5,517.5 752.5,516.5 758.5,514.5 769.5,516.5 777.5,518.5 781.5,517.5 793.5,518.5 800.5,523.5 805.5,533.5 806.5,535.5 818.5,534.5 822.5,532.5 830.5,531.5 841.5,525.5 846.5,523.5 852.5,528.5 862.5,530.5 864.5,531.5 876.5,524.5 877.5,525.5 880.5,520.5 885.5,523.5 890.5,520.5 897.5,522.5 907.5,520.5 918.5,522.5 920.5,522.5 929.5,520.5 938.5,518.5 940.5,518.5 950.5,522.5 961.5,529.5 966.5,529.5 973.5,527.5 982.5,520.5 984.5,524.5 995.5,526.5 1000.5,525.5 1006.5,525.5 1019.5,519.5 1025.5,519.5 1030.5,517.5 1043.5,521.5 1045.5,521.5 1052.5,523.5 1064.5,526.5 1070.5,524.5 1073.5,524.5 1073.5,525.5 1083.5,509.5 1083.5,509.5 1093.5,524.5 1096.5,527.5 1103.5,526.5 1108.5,523.5 1112.5,522.5 1122.5,522.5' fill='none' stroke='#000000' stroke-width='1' shape-rendering='crispEdges'/><polyline points='68.5,525.5 77.5,523.5 78.5,523.5 88.5,521.5 90.5,522.5 100.5,524.5 100.5,525.5 107.5,523.5 113.5,523.5 119.5,523.5 123.5,524.5 130.5,524.5 135.5,524.5 141.5,520.5 146.5,525.5 155.5,522.5 155.5,523.5 165.5,523.5 166.5,523.5 172.5,524.5 178.5,527.5 186.5,533.5 187.5,533.5 198.5,523.5 199.5,524.5 209.5,522.5 211.5,521.5 219.5,524.5 222.5,523.5 230.5,519.5 236.5,524.5 240.5,525.5 245.5,526.5 251.5,528.5 255.5,531.5 264.5,528.5 266.5,528.5 276.5,529.5 280.5,525.5 286.5,524.5 290.5,520.5 299.5,518.5 302.5,519.5 311.5,518.5 314.5,518.5 324.5,524.5 325.5,524.5 332.5,526.5 336.5,522.5 338.5,521.5 346.5,521.5 347.5,523.5 354.5,522.5 357.5,516.5 370.5,498.5 377.5,486.5 383.5,492.5 394.5,507.5 398.5,511.5 404.5,511.5 416.5,511.5 428.5,514.5 430.5,515.5 440.5,514.5 445.5,519.5 452.5,514.5 453.5,512.5 460.5,514.5 466.5,517.5 478.5,515.5 482.5,516.5 489.5,519.5 494.5,518.5 500.5,519.5 500.5,518.5 511.5,520.5 511.5,519.5 517.5,514.5 523.5,462.5 532.5,377.5 534.5,405.5 539.5,456.5 547.5,469.5 558.5,488.5 567.5,504.5 569.5,504.5 582.5,505.5 583.5,505.5 592.5,516.5 594.5,514.5 607.5,502.5 607.5,502.5 615.5,503.5 619.5,504.5 628.5,508.5 630.5,510.5 639.5,513.5 649.5,517.5 650.5,518.5 659.5,519.5 669.5,523.5 672.5,523.5 678.5,522.5 689.5,527.5 690.5,528.5 701.5,523.5 711.5,521.5 714.5,520.5 725.5,514.5 726.5,510.5 738.5,516.5 747.5,514.5 752.5,516.5 757.5,514.5 766.5,516.5 777.5,515.5 778.5,518.5 789.5,519.5 800.5,521.5 800.5,521.5 811.5,503.5 818.5,493.5 823.5,494.5 832.5,497.5 835.5,499.5 847.5,506.5 850.5,510.5 856.5,514.5 866.5,517.5 868.5,518.5 878.5,519.5 880.5,520.5 890.5,519.5 891.5,519.5 901.5,520.5 911.5,520.5 920.5,521.5 924.5,520.5 934.5,516.5 940.5,516.5 944.5,520.5 956.5,526.5 966.5,528.5 968.5,528.5 979.5,522.5 982.5,522.5 989.5,519.5 1000.5,526.5 1002.5,527.5 1012.5,522.5 1022.5,517.5 1025.5,514.5 1031.5,517.5 1044.5,519.5 1045.5,521.5 1054.5,521.5 1063.5,522.5 1070.5,523.5 1073.5,518.5 1080.5,505.5 1085.5,494.5 1094.5,474.5 1098.5,477.5 1108.5,484.5 1113.5,487.5 1120.5,487.5 1123.5,487.5' fill='none' stroke='#909058' stroke-width='1' shape-rendering='crispEdges'/><polyline points='68.5,526.5 76.5,527.5 77.5,523.5 88.5,524.5 90.5,525.5 98.5,524.5 100.5,525.5 107.5,522.5 110.5,525.5 119.5,525.5 122.5,526.5 130.5,525.5 132.5,526.5 141.5,526.5 144.5,522.5 155.5,524.5 156.5,525.5 165.5,525.5 166.5,524.5 172.5,525.5 179.5,529.5 186.5,535.5 189.5,531.5 198.5,525.5 200.5,523.5 211.5,521.5 212.5,523.5 222.5,524.5 224.5,522.5 236.5,525.5 236.5,524.5 245.5,527.5 246.5,531.5 255.5,529.5 256.5,530.5 266.5,530.5 266.5,529.5 276.5,528.5 280.5,526.5 287.5,525.5 290.5,520.5 296.5,521.5 302.5,517.5 307.5,520.5 314.5,519.5 319.5,521.5 325.5,525.5 329.5,526.5 332.5,526.5 338.5,520.5 340.5,522.5 346.5,522.5 349.5,521.5 354.5,526.5 361.5,530.5 367.5,535.5 370.5,534.5 380.5,527.5 380.5,525.5 392.5,524.5 400.5,523.5 402.5,522.5 414.5,520.5 425.5,519.5 432.5,517.5 436.5,518.5 445.5,518.5 447.5,518.5 452.5,515.5 456.5,514.5 460.5,515.5 466.5,515.5 476.5,515.5 482.5,519.5 486.5,518.5 494.5,519.5 496.5,522.5 500.5,517.5 509.5,520.5 511.5,521.5 518.5,539.5 527.5,560.5 528.5,559.5 538.5,551.5 545.5,545.5 548.5,544.5 560.5,537.5 570.5,533.5 573.5,530.5 585.5,524.5 587.5,524.5 598.5,509.5 607.5,501.5 609.5,501.5 615.5,502.5 620.5,504.5 630.5,506.5 630.5,508.5 642.5,515.5 650.5,518.5 652.5,520.5 663.5,523.5 672.5,521.5 673.5,524.5 685.5,526.5 690.5,527.5 698.5,522.5 709.5,521.5 711.5,518.5 719.5,517.5 725.5,514.5 730.5,514.5 742.5,513.5 752.5,512.5 753.5,515.5 762.5,515.5 772.5,515.5 777.5,515.5 783.5,516.5 795.5,518.5 800.5,521.5 806.5,515.5 818.5,503.5 818.5,503.5 829.5,506.5 841.5,509.5 845.5,508.5 851.5,511.5 864.5,517.5 866.5,519.5 876.5,519.5 880.5,521.5 885.5,521.5 890.5,518.5 895.5,520.5 905.5,520.5 917.5,522.5 920.5,523.5 929.5,519.5 938.5,518.5 940.5,515.5 950.5,523.5 960.5,523.5 966.5,528.5 973.5,526.5 982.5,521.5 983.5,520.5 992.5,524.5 1000.5,529.5 1002.5,533.5 1013.5,542.5 1020.5,550.5 1024.5,547.5 1035.5,537.5 1038.5,535.5 1045.5,535.5 1050.5,534.5 1055.5,529.5 1064.5,523.5 1065.5,522.5 1074.5,523.5 1077.5,520.5 1083.5,510.5 1088.5,517.5 1096.5,525.5 1098.5,527.5 1108.5,522.5 1108.5,521.5 1119.5,522.5 1124.5,522.5' fill='none' stroke='#a08048' stroke-width='1' shape-rendering='crispEdges'/><polyline points='68.5,526.5 71.5,526.5 77.5,528.5 82.5,524.5 90.5,523.5 95.5,525.5 100.5,525.5 107.5,526.5 107.5,525.5 118.5,527.5 119.5,530.5 128.5,526.5 130.5,526.5 137.5,525.5 141.5,525.5 150.5,525.5 155.5,526.5 162.5,526.5 165.5,525.5 172.5,524.5 172.5,528.5 184.5,534.5 186.5,536.5 196.5,526.5 198.5,527.5 208.5,524.5 211.5,522.5 218.5,525.5 222.5,522.5 228.5,524.5 236.5,526.5 238.5,525.5 245.5,529.5 250.5,529.5 255.5,531.5 262.5,532.5 266.5,529.5 274.5,529.5 280.5,529.5 284.5,528.5 290.5,524.5 294.5,520.5 302.5,518.5 304.5,521.5 313.5,520.5 314.5,518.5 324.5,526.5 325.5,523.5 332.5,525.5 334.5,523.5 338.5,525.5 344.5,523.5 346.5,523.5 354.5,525.5 354.5,526.5 357.5,528.5 365.5,512.5 377.5,489.5 387.5,502.5 398.5,518.5 398.5,516.5 409.5,518.5 419.5,520.5 429.5,519.5 430.5,516.5 442.5,520.5 445.5,518.5 452.5,514.5 454.5,516.5 460.5,515.5 466.5,517.5 478.5,520.5 482.5,520.5 490.5,519.5 494.5,520.5 500.5,518.5 500.5,519.5 510.5,523.5 511.5,522.5 516.5,517.5 522.5,501.5 522.5,500.5 533.5,369.5 533.5,370.5 539.5,455.5 545.5,466.5 558.5,489.5 567.5,506.5 570.5,506.5 583.5,509.5 583.5,506.5 592.5,520.5 595.5,518.5 606.5,503.5 607.5,502.5 615.5,503.5 618.5,504.5 630.5,509.5 630.5,510.5 642.5,513.5 650.5,517.5 654.5,519.5 665.5,522.5 672.5,525.5 676.5,524.5 686.5,527.5 690.5,528.5 698.5,525.5 709.5,524.5 711.5,520.5 720.5,518.5 725.5,515.5 730.5,516.5 742.5,516.5 752.5,514.5 754.5,514.5 767.5,515.5 777.5,516.5 780.5,516.5 789.5,518.5 799.5,520.5 800.5,522.5 811.5,476.5 811.5,476.5 822.5,482.5 825.5,483.5 834.5,494.5 840.5,501.5 844.5,504.5 854.5,512.5 856.5,516.5 867.5,517.5 879.5,518.5 880.5,520.5 890.5,519.5 891.5,519.5 904.5,518.5 916.5,523.5 920.5,520.5 929.5,518.5 940.5,518.5 942.5,516.5 954.5,522.5 966.5,529.5 967.5,528.5 978.5,524.5 982.5,521.5 988.5,523.5 999.5,526.5 1000.5,527.5 1011.5,524.5 1024.5,517.5 1025.5,515.5 1036.5,515.5 1045.5,520.5 1046.5,520.5 1056.5,522.5 1065.5,522.5 1070.5,525.5 1072.5,523.5 1074.5,517.5 1084.5,481.5 1087.5,471.5 1093.5,462.5 1096.5,457.5 1104.5,471.5 1114.5,490.5 1114.5,490.5 1124.5,490.5' fill='none' stroke='#2c2c70' stroke-width='1' shape-rendering='crispEdges'/><polyline points='68.5,525.5 69.5,524.5 77.5,524.5 82.5,524.5 90.5,522.5 94.5,523.5 100.5,526.5 105.5,523.5 107.5,525.5 115.5,525.5 119.5,523.5 125.5,525.5 130.5,524.5 134.5,523.5 141.5,521.5 144.5,523.5 154.5,526.5 155.5,525.5 165.5,524.5 166.5,523.5 172.5,524.5 176.5,527.5 186.5,532.5 186.5,533.5 198.5,525.5 198.5,525.5 211.5,520.5 220.5,522.5 222.5,520.5 231.5,522.5 236.5,522.5 244.5,526.5 245.5,529.5 254.5,530.5 255.5,531.5 266.5,529.5 266.5,530.5 278.5,526.5 280.5,527.5 289.5,524.5 290.5,522.5 298.5,521.5 302.5,517.5 310.5,517.5 314.5,517.5 322.5,524.5 325.5,524.5 332.5,524.5 333.5,525.5 338.5,522.5 344.5,522.5 346.5,520.5 354.5,524.5 356.5,532.5 368.5,608.5 368.5,608.5 381.5,596.5 391.5,588.5 403.5,577.5 414.5,567.5 427.5,555.5 440.5,544.5 442.5,542.5 451.5,561.5 457.5,574.5 463.5,566.5 476.5,550.5 476.5,550.5 485.5,544.5 496.5,536.5 498.5,535.5 508.5,532.5 509.5,528.5 519.5,547.5 525.5,557.5 530.5,559.5 538.5,564.5 541.5,562.5 551.5,557.5 558.5,553.5 564.5,547.5 573.5,537.5 574.5,536.5 585.5,532.5 587.5,529.5 596.5,548.5 601.5,559.5 605.5,558.5 617.5,553.5 622.5,551.5 629.5,546.5 640.5,540.5 642.5,539.5 652.5,530.5 660.5,528.5 663.5,524.5 672.5,522.5 672.5,523.5 684.5,525.5 690.5,526.5 696.5,522.5 708.5,520.5 711.5,520.5 718.5,520.5 725.5,514.5 728.5,516.5 737.5,518.5 750.5,524.5 757.5,525.5 761.5,536.5 770.5,555.5 771.5,555.5 783.5,553.5 786.5,552.5 794.5,559.5 801.5,566.5 804.5,566.5 816.5,566.5 822.5,566.5 828.5,559.5 835.5,551.5 839.5,548.5 849.5,540.5 850.5,539.5 860.5,534.5 870.5,526.5 880.5,520.5 880.5,524.5 890.5,521.5 901.5,525.5 914.5,522.5 920.5,521.5 925.5,534.5 935.5,548.5 936.5,548.5 945.5,544.5 958.5,538.5 968.5,532.5 978.5,530.5 983.5,528.5 990.5,526.5 1000.5,526.5 1003.5,525.5 1012.5,518.5 1021.5,519.5 1025.5,514.5 1031.5,516.5 1044.5,521.5 1045.5,521.5 1055.5,522.5 1065.5,525.5 1066.5,524.5 1076.5,558.5 1077.5,560.5 1087.5,564.5 1094.5,567.5 1097.5,564.5 1106.5,556.5 1110.5,552.5 1116.5,552.5 1129.5,552.5 1130.5,552.5' fill='none' stroke='#8aa850' stroke-width='1' shape-rendering='crispEdges'/><polyline points='68.5,530.5 71.5,529.5 80.5,531.5 82.5,531.5 90.5,530.5 93.5,529.5 100.5,530.5 102.5,529.5 114.5,527.5 120.5,529.5 126.5,529.5 135.5,526.5 138.5,530.5 147.5,532.5 149.5,532.5 160.5,527.5 161.5,526.5 172.5,524.5 172.5,523.5 182.5,534.5 186.5,537.5 194.5,531.5 198.5,526.5 204.5,526.5 211.5,523.5 216.5,526.5 222.5,527.5 229.5,527.5 236.5,526.5 240.5,529.5 245.5,531.5 251.5,532.5 255.5,535.5 260.5,534.5 266.5,537.5 270.5,530.5 280.5,528.5 282.5,528.5 290.5,524.5 294.5,525.5 302.5,522.5 306.5,521.5 314.5,523.5 315.5,523.5 325.5,528.5 327.5,524.5 332.5,528.5 338.5,524.5 340.5,523.5 346.5,525.5 352.5,526.5 354.5,525.5 364.5,535.5 375.5,544.5 377.5,546.5 386.5,542.5 395.5,538.5 395.5,538.5 404.5,536.5 417.5,533.5 420.5,532.5 428.5,529.5 438.5,527.5 440.5,525.5 449.5,520.5 462.5,521.5 465.5,522.5 475.5,521.5 487.5,522.5 499.5,522.5 510.5,524.5 510.5,523.5 522.5,578.5 524.5,590.5 534.5,589.5 545.5,587.5 549.5,587.5 554.5,582.5 565.5,571.5 573.5,564.5 577.5,564.5 588.5,563.5 592.5,563.5 601.5,568.5 610.5,573.5 613.5,569.5 624.5,556.5 627.5,553.5 635.5,548.5 647.5,542.5 650.5,540.5 659.5,538.5 670.5,533.5 672.5,534.5 680.5,532.5 692.5,531.5 700.5,532.5 702.5,530.5 714.5,527.5 727.5,522.5 737.5,520.5 740.5,518.5 749.5,520.5 756.5,524.5 758.5,525.5 767.5,536.5 771.5,536.5 782.5,535.5 790.5,535.5 794.5,535.5 800.5,535.5 804.5,567.5 810.5,611.5 814.5,608.5 824.5,599.5 834.5,590.5 846.5,579.5 857.5,569.5 869.5,558.5 882.5,546.5 886.5,543.5 892.5,542.5 900.5,540.5 902.5,539.5 914.5,533.5 924.5,527.5 925.5,525.5 937.5,516.5 939.5,513.5 948.5,517.5 957.5,521.5 968.5,530.5 970.5,528.5 982.5,524.5 982.5,523.5 990.5,526.5 994.5,534.5 1006.5,539.5 1019.5,549.5 1020.5,550.5 1032.5,540.5 1038.5,535.5 1041.5,537.5 1050.5,533.5 1050.5,533.5 1059.5,526.5 1065.5,524.5 1071.5,520.5 1076.5,522.5 1082.5,500.5 1093.5,465.5 1094.5,466.5 1103.5,475.5 1113.5,484.5 1113.5,484.5 1123.5,484.5' fill='none' stroke='#583080' stroke-width='1' shape-rendering='crispEdges'/><rect x='68.5' y='348.5' width='1119' height='265' fill='none' stroke='#000' stroke-width='1.15'/><line x1='63' x2='69' y1='348.5' y2='348.5' stroke='#000' stroke-width='1.5'/><line x1='63' x2='69' y1='362.5' y2='362.5' stroke='#000' stroke-width='1.5'/><line x1='63' x2='69' y1='385.5' y2='385.5' stroke='#000' stroke-width='1.5'/><line x1='63' x2='69' y1='408.5' y2='408.5' stroke='#000' stroke-width='1.5'/><line x1='63' x2='69' y1='431.5' y2='431.5' stroke='#000' stroke-width='1.5'/><line x1='63' x2='69' y1='453.5' y2='453.5' stroke='#000' stroke-width='1.5'/><line x1='63' x2='69' y1='476.5' y2='476.5' stroke='#000' stroke-width='1.5'/><line x1='63' x2='69' y1='499.5' y2='499.5' stroke='#000' stroke-width='1.5'/><line x1='63' x2='69' y1='522.5' y2='522.5' stroke='#000' stroke-width='1.5'/><line x1='63' x2='69' y1='544.5' y2='544.5' stroke='#000' stroke-width='1.5'/><line x1='63' x2='69' y1='567.5' y2='567.5' stroke='#000' stroke-width='1.5'/><line x1='63' x2='69' y1='590.5' y2='590.5' stroke='#000' stroke-width='1.5'/><line x1='63' x2='69' y1='613.5' y2='613.5' stroke='#000' stroke-width='1.5'/><line x1='68.5' x2='68.5' y1='613' y2='618' stroke='#000' stroke-width='1.2'/><line x1='254.5' x2='254.5' y1='613' y2='618' stroke='#000' stroke-width='1.2'/><line x1='441.5' x2='441.5' y1='613' y2='618' stroke='#000' stroke-width='1.2'/><line x1='627.5' x2='627.5' y1='613' y2='618' stroke='#000' stroke-width='1.2'/><line x1='814.5' x2='814.5' y1='613' y2='618' stroke='#000' stroke-width='1.2'/><line x1='1001.5' x2='1001.5' y1='613' y2='618' stroke='#000' stroke-width='1.2'/><line x1='1187.5' x2='1187.5' y1='613' y2='618' stroke='#000' stroke-width='1.2'/></svg>
<div class='t r' style='left:-43px;width:100px;top:344.9px;font-size:12px;letter-spacing:-1.2px'>135.55</div>
<div class='t r' style='left:-43px;width:100px;top:358.9px;font-size:12px;letter-spacing:-1.2px'>129.00</div>
<div class='t r' style='left:-43px;width:100px;top:381.9px;font-size:12px;letter-spacing:-1.2px'>119.00</div>
<div class='t r' style='left:-43px;width:100px;top:404.9px;font-size:12px;letter-spacing:-1.2px'>109.00</div>
<div class='t r' style='left:-43px;width:100px;top:427.9px;font-size:12px;letter-spacing:-1.2px'>99.00</div>
<div class='t r' style='left:-43px;width:100px;top:449.9px;font-size:12px;letter-spacing:-1.2px'>89.00</div>
<div class='t r' style='left:-43px;width:100px;top:472.9px;font-size:12px;letter-spacing:-1.2px'>79.00</div>
<div class='t r' style='left:-43px;width:100px;top:495.9px;font-size:12px;letter-spacing:-1.2px'>69.00</div>
<div class='t r' style='left:-43px;width:100px;top:518.9px;font-size:12px;letter-spacing:-1.2px'>59.00</div>
<div class='t r' style='left:-43px;width:100px;top:540.9px;font-size:12px;letter-spacing:-1.2px'>49.00</div>
<div class='t r' style='left:-43px;width:100px;top:563.9px;font-size:12px;letter-spacing:-1.2px'>39.00</div>
<div class='t r' style='left:-43px;width:100px;top:586.9px;font-size:12px;letter-spacing:-1.2px'>29.00</div>
<div class='t r' style='left:-43px;width:100px;top:609.9px;font-size:12px;letter-spacing:-1.2px'>19.00</div>
<div class='t' style='left:8.5px;width:120px;text-align:center;top:620px;font-size:12.5px;letter-spacing:-1.6px'>0:00:00</div>
<div class='t' style='left:194.5px;width:120px;text-align:center;top:620px;font-size:12.5px;letter-spacing:-1.6px'>0:00:20</div>
<div class='t' style='left:381.5px;width:120px;text-align:center;top:620px;font-size:12.5px;letter-spacing:-1.6px'>0:00:40</div>
<div class='t' style='left:567.5px;width:120px;text-align:center;top:620px;font-size:12.5px;letter-spacing:-1.6px'>0:01:00</div>
<div class='t' style='left:754.5px;width:120px;text-align:center;top:620px;font-size:12.5px;letter-spacing:-1.6px'>0:01:20</div>
<div class='t' style='left:941.5px;width:120px;text-align:center;top:620px;font-size:12.5px;letter-spacing:-1.6px'>0:01:40</div>
<div class='t' style='left:1127.5px;width:120px;text-align:center;top:620px;font-size:12.5px;letter-spacing:-1.6px'>0:02:00</div>
<div class='t' style='left:527px;width:200px;text-align:center;top:638px;font-size:12px;letter-spacing:-0.3px'>Elapsed time (h:mm:ss)</div>
<div class='t' style='left:-5px;top:475px;width:40px;text-align:center;transform:rotate(-90deg);font-size:12.5px;letter-spacing:-0.4px'>Mbps</div>
<div class='a' style='left:12px;top:316px;font-family:"Liberation Serif", serif;font-size:20.5px;line-height:24px;letter-spacing:0.2px;color:#1a1a1a;white-space:pre'>Throughput</div>
<svg class='a' style='left:0;top:0' width='1540' height='656'><defs><filter id='sh' x='-30%' y='-30%' width='160%' height='160%'><feGaussianBlur in='SourceAlpha' stdDeviation='2.4'/><feOffset dx='2.5' dy='2.5' result='o'/><feComponentTransfer in='o' result='o2'><feFuncA type='linear' slope='1.1'/></feComponentTransfer><feFlood flood-color='#2a2a2a'/><feComposite in2='o2' operator='in'/><feMerge><feMergeNode/><feMergeNode in='SourceGraphic'/></feMerge></filter><filter id='sh2' x='-10%' y='-40%' width='120%' height='180%'><feGaussianBlur in='SourceAlpha' stdDeviation='0.9'/><feOffset dx='1' dy='1' result='o'/><feFlood flood-color='#333'/><feComposite in2='o' operator='in'/><feMerge><feMergeNode/><feMergeNode in='SourceGraphic'/></feMerge></filter></defs><g filter='url(#sh)' fill='#fff'><polygon points='1430,565 1438,565 1438,580 1450,565 1459,565 1443,583 1459,601 1450,601 1438,586 1438,601 1430,601'/><path fill-rule='evenodd' d='M1454,580 a12,12 0 1,0 24,0 a12,12 0 1,0 -24,0 Z M1461,580 a7.5,7.5 0 1,0 15,0 a7.5,7.5 0 1,0 -15,0 Z'/><path fill-rule='evenodd' d='M1480,580 a12,12 0 1,0 24,0 a12,12 0 1,0 -24,0 Z M1487,580 a7.5,7.5 0 1,0 15,0 a7.5,7.5 0 1,0 -15,0 Z'/><circle cx='1470.5' cy='580' r='5.5'/><circle cx='1496.5' cy='580' r='5.5'/><polygon points='1504,578 1514,565 1523,565 1509,583 1523,601 1514,601 1504,588'/><path d='M1455,594 L1461,597 Q1480,609 1499,597 L1505,594 Q1480,633 1455,594 Z'/><text x='1430' y='636' font-family='Liberation Sans' font-weight='bold' font-size='26.5' letter-spacing='-0.2'>SHARE</text></g><text filter='url(#sh2)' fill='#fff' stroke='#fff' stroke-width='0.5' x='1339' y='635.5' font-family='Liberation Sans' font-weight='bold' font-size='14' letter-spacing='-0.1'>koolshare.cn</text></svg>
</body></html>
